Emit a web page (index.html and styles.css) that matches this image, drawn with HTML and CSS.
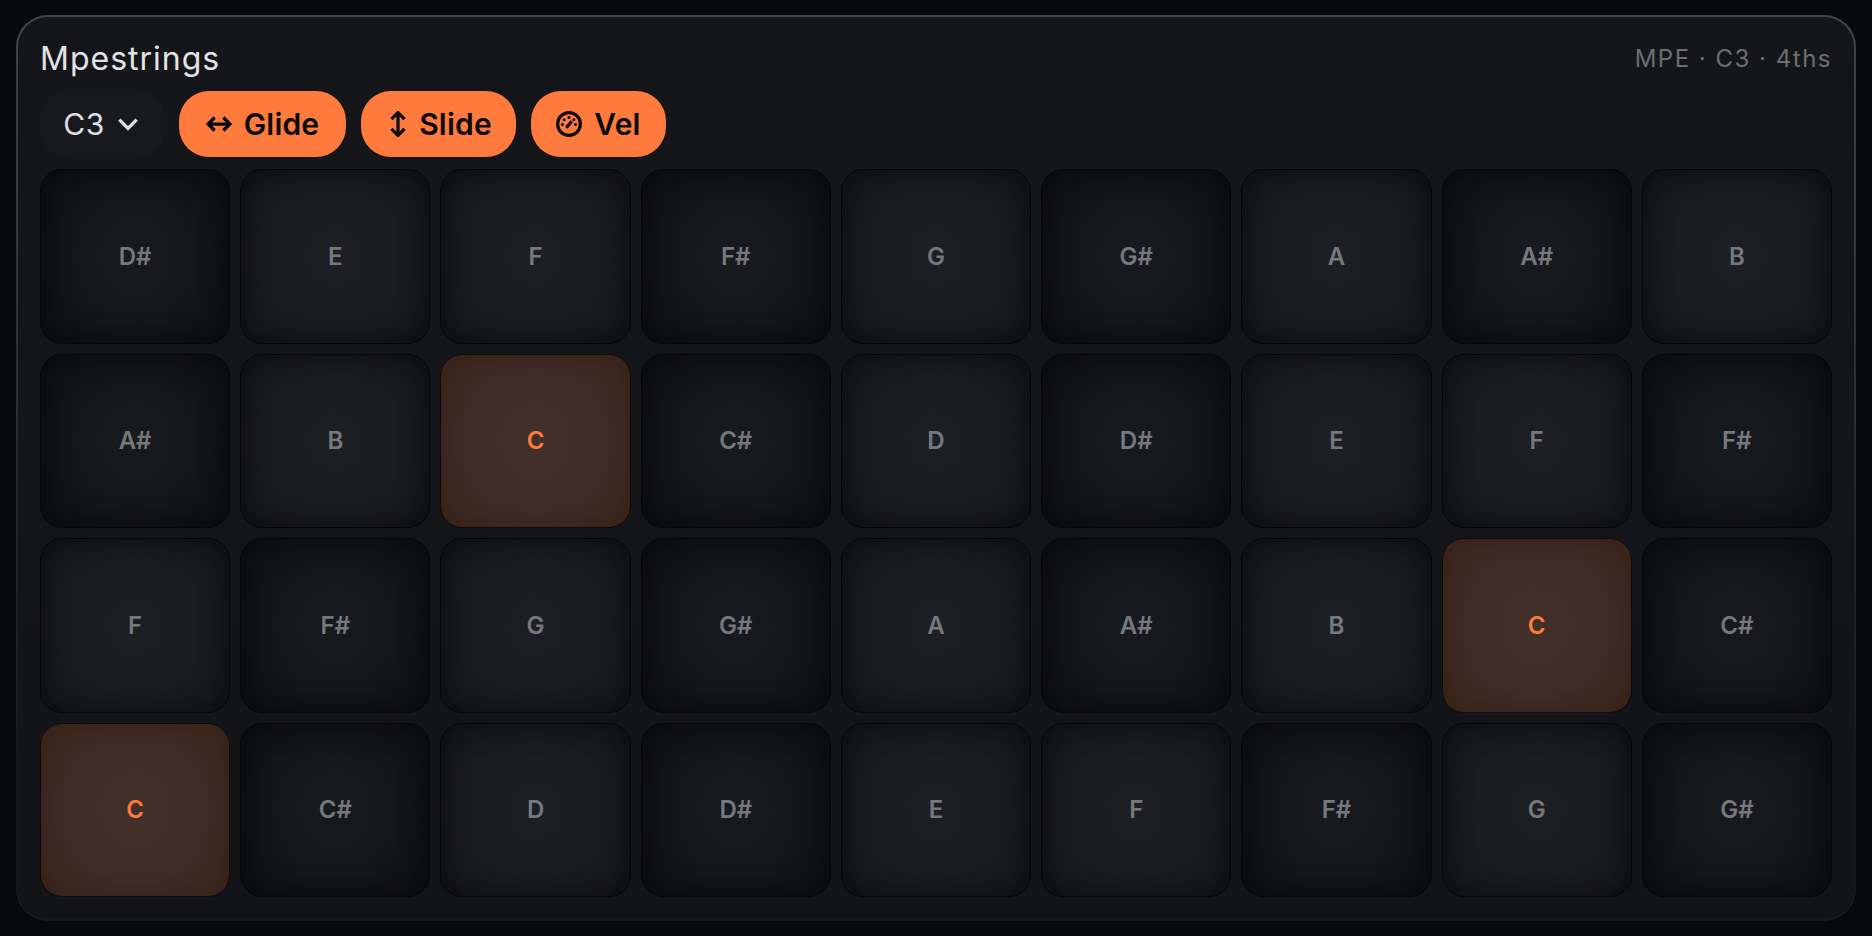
FILE: index.html
```html
<!DOCTYPE html>
<html lang="en">
<head>
    <meta charset="UTF-8">
    <title>Mpestrings</title>
    <link rel="stylesheet" href="styles.css">
</head>
<body>
    <div class="panel">
        <div class="panel-header">
            <span class="title">Mpestrings</span>
            <span class="info">MPE · C3 · 4ths</span>
        </div>

        <div class="toolbar">
            <div class="root-select">
                <span>C3</span>
                <svg class="chevron" viewBox="0 0 24 24"><path d="M4 8l8 8 8-8"/></svg>
            </div>
            <button class="pill pill-glide">
                <svg class="pill-icon" viewBox="0 0 24 24"><path d="M2 12h20M8 6l-6 6 6 6M16 6l6 6-6 6"/></svg>
                Glide
            </button>
            <button class="pill pill-slide">
                <svg class="pill-icon" viewBox="0 0 24 24"><path d="M12 1.5v21M6 7.5l6-6 6 6M6 16.5l6 6 6-6"/></svg>
                Slide
            </button>
            <button class="pill pill-vel">
                <svg class="pill-icon" viewBox="0 0 24 24">
                    <circle cx="12" cy="12" r="10.5"/>
                    <path d="M9.5 15.5l5-6"/>
                    <circle class="dot" cx="12" cy="6" r="1.4"/>
                    <circle class="dot" cx="7.5" cy="8" r="1.4"/>
                    <circle class="dot" cx="6" cy="12.5" r="1.4"/>
                    <circle class="dot" cx="16.5" cy="8" r="1.4"/>
                    <circle class="dot" cx="18" cy="12.5" r="1.4"/>
                </svg>
                Vel
            </button>
        </div>

        <div class="pads">
            <div class="pad sharp">D#</div>
            <div class="pad">E</div>
            <div class="pad">F</div>
            <div class="pad sharp">F#</div>
            <div class="pad">G</div>
            <div class="pad sharp">G#</div>
            <div class="pad">A</div>
            <div class="pad sharp">A#</div>
            <div class="pad">B</div>

            <div class="pad sharp">A#</div>
            <div class="pad">B</div>
            <div class="pad root">C</div>
            <div class="pad sharp">C#</div>
            <div class="pad">D</div>
            <div class="pad sharp">D#</div>
            <div class="pad">E</div>
            <div class="pad">F</div>
            <div class="pad sharp">F#</div>

            <div class="pad">F</div>
            <div class="pad sharp">F#</div>
            <div class="pad">G</div>
            <div class="pad sharp">G#</div>
            <div class="pad">A</div>
            <div class="pad sharp">A#</div>
            <div class="pad">B</div>
            <div class="pad root">C</div>
            <div class="pad sharp">C#</div>

            <div class="pad root">C</div>
            <div class="pad sharp">C#</div>
            <div class="pad">D</div>
            <div class="pad sharp">D#</div>
            <div class="pad">E</div>
            <div class="pad">F</div>
            <div class="pad sharp">F#</div>
            <div class="pad">G</div>
            <div class="pad sharp">G#</div>
        </div>
    </div>
</body>
</html>
```

FILE: styles.css
```css
* {
    box-sizing: border-box;
}

body {
    margin: 0;
    height: 936px;
    padding: 15px 16px 15px;
    background-color: #08090c;
    font-family: Inter, "Liberation Sans", sans-serif;
    overflow: hidden;
}

.panel {
    height: 906px;
    padding: 22px 22px 22px;
    border: 2px solid transparent;
    border-radius: 32px;
    background: linear-gradient(#15161a, #131417) padding-box,
                linear-gradient(#434448, #2e2f33 40%, #17181b 85%) border-box;
    display: flex;
    flex-direction: column;
}

.panel-header {
    display: flex;
    justify-content: space-between;
    align-items: center;
    height: 38px;
    margin-bottom: 14px;
}

.title {
    font-size: 32px;
    font-weight: 400;
    letter-spacing: 1px;
    color: #e2e3e6;
}

.info {
    font-size: 24px;
    letter-spacing: 1.5px;
    color: #6d6e72;
}

.toolbar {
    display: flex;
    align-items: center;
    gap: 15px;
    height: 66px;
    margin-bottom: 12px;
}

.root-select {
    width: 124px;
    height: 66px;
    border-radius: 28px;
    background-color: #18191c;
    color: #dfe0e3;
    font-size: 30px;
    letter-spacing: 0.5px;
    display: flex;
    justify-content: center;
    align-items: center;
    gap: 10px;
}

.chevron {
    width: 26px;
    height: 26px;
    fill: none;
    stroke: #dfe0e3;
    stroke-width: 3;
}

.pill {
    height: 66px;
    padding: 0;
    border: none;
    border-radius: 30px;
    background-color: #ff7a3d;
    color: #0a0a0a;
    font-family: inherit;
    font-size: 30px;
    font-weight: 600;
    letter-spacing: 0.2px;
    display: flex;
    justify-content: center;
    align-items: center;
    gap: 12px;
}

.pill-glide {
    width: 167px;
}

.pill-slide {
    width: 155px;
    gap: 8px;
}

.pill-vel {
    width: 135px;
}

.pill-icon {
    width: 26px;
    height: 26px;
    fill: none;
    stroke: #0a0a0a;
    stroke-width: 3;
}

.pill-icon .dot {
    fill: #0a0a0a;
    stroke: none;
}

.pads {
    flex: 1;
    display: grid;
    grid-template-columns: repeat(9, 1fr);
    grid-template-rows: repeat(4, 1fr);
    gap: 10px;
}

.pad {
    border: 1px solid #050607;
    border-radius: 22px;
    background: radial-gradient(ellipse 60% 70% at center, #1e1f26 0%, #1b1c21 55%, #15161a 100%);
    box-shadow: inset 0 0 26px #0c0d0f;
    color: #77787c;
    font-size: 24px;
    font-weight: 600;
    display: flex;
    justify-content: center;
    align-items: center;
}

.pad.sharp {
    background: radial-gradient(ellipse 60% 70% at center, #191a1f 0%, #15161a 55%, #0f1013 100%);
    box-shadow: inset 0 0 26px #090a0b;
}

.pad.root {
    background: radial-gradient(ellipse 60% 70% at center, #43302a 0%, #402c25 55%, #3b261d 100%);
    box-shadow: inset 0 0 18px #37221a;
    border-color: #120a06;
    color: #ff7a3d;
}
```
